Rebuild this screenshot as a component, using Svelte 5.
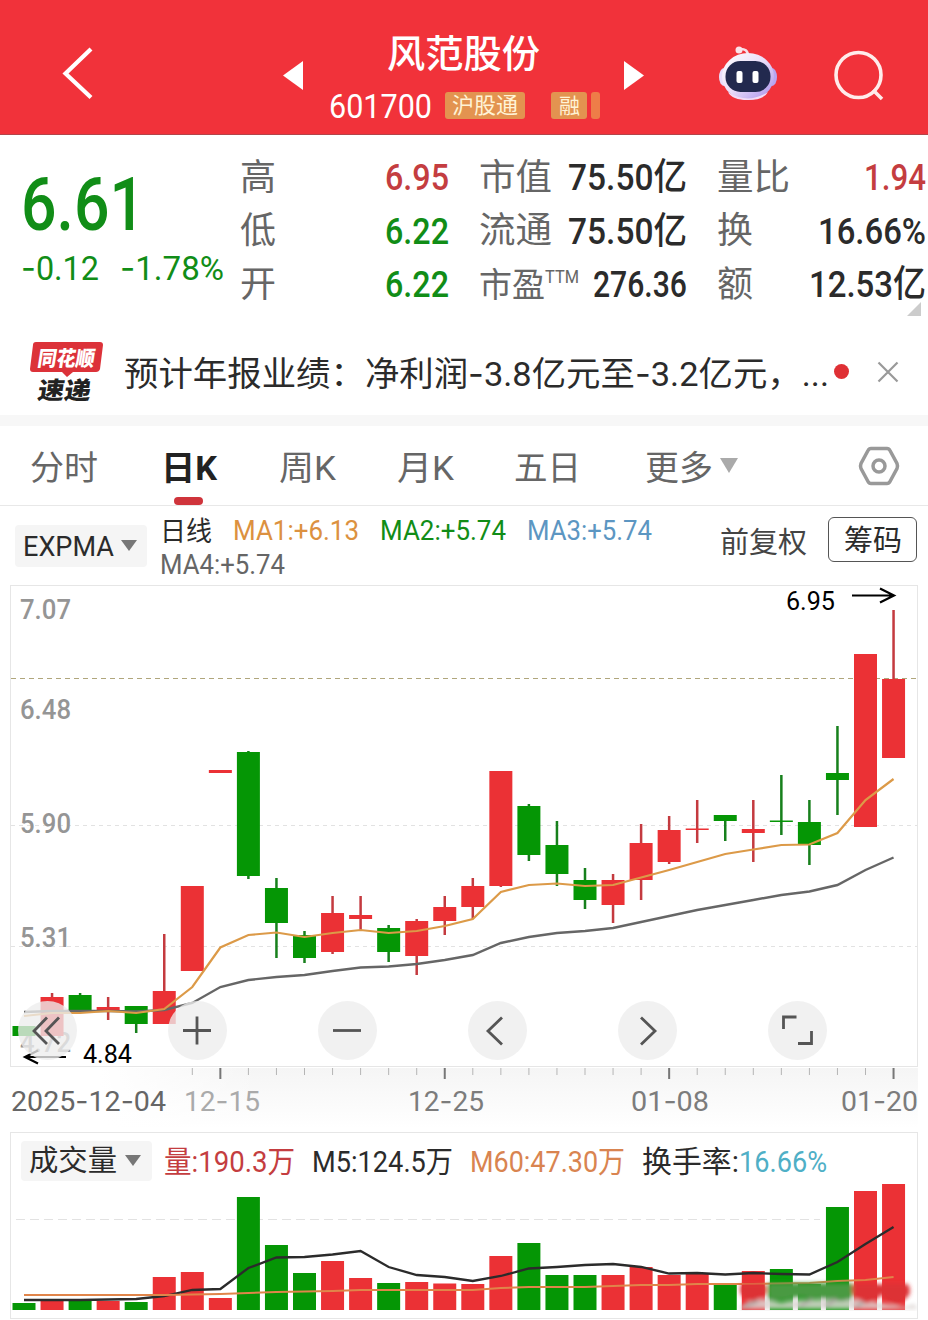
<script lang="ts">
  const RED = '#eb3135';
  const GREEN = '#059605';

  // [colour, high, bodyTop, bodyBottom, low, volumeTop]
  const candles: [string, number, number, number, number, number][] = [
    ['g', 1026, 1026, 1036, 1036, 1303],
    ['r', 993, 997, 1036, 1036, 1299],
    ['g', 993, 995, 1012, 1012, 1301],
    ['r', 997, 1007, 1012, 1020, 1301],
    ['g', 1006, 1006, 1024, 1033, 1302],
    ['r', 934, 991, 1024, 1024, 1277],
    ['r', 886, 886, 971, 971, 1272],
    ['r', 770, 770, 773, 773, 1298],
    ['g', 751, 752, 876, 879, 1197],
    ['g', 878, 888, 923, 958, 1245],
    ['g', 931, 935, 958, 963, 1273],
    ['r', 896, 913, 952, 954, 1261],
    ['r', 896, 915, 919, 930, 1278],
    ['g', 925, 928, 952, 962, 1283],
    ['r', 919, 921, 956, 975, 1282],
    ['r', 896, 907, 921, 935, 1283.5],
    ['r', 878, 886, 907, 919, 1284],
    ['r', 771, 771, 886, 887, 1256],
    ['g', 804, 806, 855, 861, 1243],
    ['g', 821, 845, 874, 886, 1275],
    ['g', 868, 880, 900, 909, 1275],
    ['r', 874, 880, 905, 923, 1275],
    ['r', 824, 843, 880, 900, 1267],
    ['r', 816, 830, 862, 864, 1275],
    ['r', 800, 828.5, 830, 843, 1273],
    ['g', 815, 815, 821, 841, 1284],
    ['r', 800, 829, 833, 862, 1271],
    ['g', 775, 820.5, 822, 835, 1269],
    ['g', 800, 822, 845, 865, 1284],
    ['g', 726, 773, 780, 815, 1207],
    ['r', 654, 654, 827, 827, 1191],
    ['r', 610, 679, 758, 758, 1184],
  ];

  const ma1 = [1016, 1013, 1013, 1011, 1013, 1009, 987, 947.5, 935, 932.5, 937, 933, 930, 933, 931, 926, 919, 892, 885, 883.5, 886, 885, 877.5, 870, 862, 854, 849.5, 845, 844.5, 833, 800, 779];
  const ma4 = [1012, 1011, 1011, 1011, 1011.5, 1010, 1003, 987, 980, 977, 975, 971, 967.5, 966.5, 964, 960, 955, 943, 937, 933, 931, 928, 922, 916, 910, 905, 900, 895, 891.5, 885, 870, 857.5];
  const m5 = [1300, 1300, 1300, 1299.5, 1299, 1296, 1290, 1289, 1268, 1257.5, 1257, 1254.5, 1251, 1267, 1275, 1277, 1281, 1276, 1268.5, 1267, 1265, 1264, 1267, 1273.5, 1273, 1274.5, 1273, 1274, 1274.5, 1262, 1244, 1227];
  const m60 = [1295, 1295, 1295, 1295, 1295, 1295, 1294.5, 1294, 1293, 1292, 1291.5, 1291, 1290, 1290, 1290, 1290, 1290, 1288, 1287, 1287, 1287, 1286, 1285, 1285, 1284, 1284, 1284, 1283.5, 1283, 1281, 1280, 1277];

  const cx = (i: number) => 24 + i * 28.05;
  const line = (ys: number[]) => ys.map((y, i) => `${cx(i)},${y}`).join(' ');
  const fill = (c: string) => (c === 'r' ? RED : GREEN);

  const axis = [
    ['7.07', 619],
    ['6.48', 719],
    ['5.90', 833],
    ['5.31', 947],
    ['4.72', 1052],
  ] as [string, number][];

  const dates = [
    ['2025-12-04', 11, 155, '#666'],
    ['12-15', 184, 76, '#aaa'],
    ['12-25', 408, 76, '#7c7c7c'],
    ['01-08', 631, 78, '#7c7c7c'],
    ['01-20', 841, 77, '#7c7c7c'],
  ] as [string, number, number, string][];

  const tabs = [
    ['分时', 68],
    ['日K', 56],
    ['周K', 57],
    ['月K', 57],
    ['五日', 67],
    ['更多', 68],
  ] as [string, number][];
  let active = $state('日K');

  // back, zoom in, zoom out, prev, next, fullscreen
  const controls = [
    'M29 16.500l-13 13.500 13 13M41 16.500l-13 13.500 13 13',
    'M15 29.5h28M29 15.5v28',
    'M15 29.5h28',
    'M34 16.500l-14 13.500 14 13.500',
    'M23 16.500l14 13.500-14 13.500',
    'M15.500 28v-12h13M43.500 30v12.500h-13.500',
  ];
</script>

{#snippet parts(text: string)}{#each text.split(/(-)/) as p}{#if p === '-'}<tspan class="dash">-</tspan>{:else}{p}{/if}{/each}{/snippet}

<!-- one line of text squeezed to an exact width -->
{#snippet fit(text: string, w: number, size: number, cls = '')}
  <svg class="fit {cls}" width={w} height={size}>
    <text x="0" y={size * 0.87} font-size={size} textLength={w} lengthAdjust="spacingAndGlyphs">{@render parts(text)}</text>
  </svg>
{/snippet}

<div class="app">
  <header>
    <svg class="back" width="32" height="54" viewBox="0 0 32 54"><path d="M29 3L3.500 27.500 29 51.500" fill="none" stroke="#fff" stroke-width="4.200" /></svg>
    <svg class="prev" width="20" height="30" viewBox="0 0 20 30"><path d="M20 0v29L0 14.500z" fill="#fff" /></svg>
    <div class="title">
      <div class="name">{@render fit('风范股份', 153, 38, 'mid')}</div>
      <div class="code">
        {@render fit('601700', 103, 33)}
        <span class="tag hgt">{@render fit('沪股通', 66, 22)}</span>
        <span class="tag rong">{@render fit('融', 21, 21)}</span>
        <span class="tag cut"></span>
      </div>
    </div>
    <svg class="next" width="20" height="30" viewBox="0 0 20 30"><path d="M0 0v29L20 14.500z" fill="#fff" /></svg>
    <svg class="robot" width="60" height="58" viewBox="0 0 60 58">
      <defs>
        <linearGradient id="shell" x1="0" y1="0" x2="1" y2="1">
          <stop offset="0" stop-color="#fff" /><stop offset=".5" stop-color="#e9dcf8" /><stop offset="1" stop-color="#a58bea" />
        </linearGradient>
      </defs>
      <path d="M21 4q9-1 9 7" fill="none" stroke="#f7dfe9" stroke-width="2.500" />
      <circle cx="21" cy="5" r="3.500" fill="#fbe3ea" />
      <ellipse cx="6" cy="32" rx="5" ry="9" fill="#e8dcfa" />
      <ellipse cx="54" cy="32" rx="5" ry="9" fill="#b8a5f2" />
      <ellipse cx="30" cy="31.500" rx="26" ry="23.500" fill="url(#shell)" />
      <path d="M10 47q20 13 40 0-4 8-20 8t-20-8z" fill="#f3dcf5" />
      <rect x="7.500" y="16" width="45" height="31" rx="15" fill="#22294e" />
      <rect x="18.500" y="26" width="6" height="12" rx="2" fill="#fff" />
      <rect x="34.500" y="26" width="6" height="12" rx="2" fill="#fff" />
    </svg>
    <svg class="search" width="52" height="52" viewBox="0 0 52 52"><circle cx="25.500" cy="25" r="22.500" /><path d="M40 40l9 9" /></svg>
  </header>

  <section class="quote">
    <div class="price">
      {@render fit('6.61', 124, 75, 'green mid')}
      <div class="chg">
        {@render fit('-0.12', 78, 34, 'green')}
        {@render fit('-1.78%', 104, 34, 'green')}
      </div>
    </div>
    <dl>
      <div>{@render fit('高', 36, 36, 'gray')}{@render fit('6.95', 64, 37, 'crimson mid')}</div>
      <div>{@render fit('低', 36, 36, 'gray')}{@render fit('6.22', 64, 37, 'green mid')}</div>
      <div>{@render fit('开', 36, 36, 'gray')}{@render fit('6.22', 64, 37, 'green mid')}</div>
    </dl>
    <dl>
      <div>{@render fit('市值', 73, 36, 'gray')}{@render fit('75.50亿', 119, 37, 'mid')}</div>
      <div>{@render fit('流通', 73, 36, 'gray')}{@render fit('75.50亿', 119, 37, 'mid')}</div>
      <div>
        <span class="pe">{@render fit('市盈', 66, 34, 'gray')}{@render fit('TTM', 34, 18, 'gray')}</span>
        {@render fit('276.36', 94, 37, 'mid')}
      </div>
    </dl>
    <dl>
      <div>{@render fit('量比', 73, 36, 'gray')}{@render fit('1.94', 62, 37, 'crimson mid')}</div>
      <div>{@render fit('换', 36, 36, 'gray')}{@render fit('16.66%', 108, 37, 'mid')}</div>
      <div>{@render fit('额', 36, 36, 'gray')}{@render fit('12.53亿', 117, 37, 'mid')}</div>
    </dl>
    <i class="corner"></i>
  </section>

  <section class="news">
    <svg width="76" height="64" viewBox="0 0 76 64">
      <path d="M7 2h64q3 0 3 3l-3 24q-1 3-4 3H44l-6 5-5-5H4q-3 0-3-3L4 5q0-3 3-3z" fill="#dc3239" />
      <g transform="skewX(-9)">
        <text x="12" y="26" font-size="21" font-weight="900" fill="#fff" textLength="57" lengthAdjust="spacingAndGlyphs">同花顺</text>
        <text x="17" y="59" font-size="24" font-weight="900" fill="#222" textLength="53" lengthAdjust="spacingAndGlyphs">速递</text>
      </g>
    </svg>
    {@render fit('预计年报业绩：净利润-3.8亿元至-3.2亿元，...', 705, 34, 'headline')}
    <i class="dot"></i>
    <svg class="close" width="22" height="22" viewBox="0 0 22 22"><path d="M1.500 1.500l19 19M20.500 1.500l-19 19" stroke="#999" stroke-width="2.200" /></svg>
  </section>

  <nav>
    {#each tabs as [t, w]}
      <button class="tab" class:on={t === active} onclick={() => (active = t)}>
        {@render fit(t, w, 34)}
        {#if t === '更多'}<i class="tri big"></i>{/if}
      </button>
    {/each}
    <svg class="gear" width="42" height="40" viewBox="0 0 42 40">
      <path d="M13 2.500h16q2 0 3 2l7 13q1 2.500 0 5l-7 13q-1 2-3 2H13q-2 0-3-2l-7-13q-1-2.500 0-5l7-13q1-2 3-2z" />
      <circle cx="21" cy="20" r="6" />
    </svg>
  </nav>

  <section class="indicators">
    <button class="pick">{@render fit('EXPMA', 91, 28)}<i class="tri"></i></button>
    <div class="mas">
      <div>
        {@render fit('日线', 52, 27)}
        {@render fit('MA1:+6.13', 126, 28, 'orange')}
        {@render fit('MA2:+5.74', 126, 28, 'green')}
        {@render fit('MA3:+5.74', 125, 28, 'blue')}
      </div>
      <div>{@render fit('MA4:+5.74', 125, 28, 'gray')}</div>
    </div>
    {@render fit('前复权', 87, 29, 'dark')}
    <button class="chips">{@render fit('筹码', 58, 29)}</button>
  </section>

  <section class="kline">
    <svg width="928" height="547" viewBox="0 585 928 547">
      <defs>
        <linearGradient id="strip" x1="0" y1="0" x2="0" y2="1"><stop offset="0" stop-color="#f5f5f5" /><stop offset="1" stop-color="#fff" /></linearGradient>
        <linearGradient id="fade" x1="0" y1="0" x2="1" y2="0"><stop offset="0" stop-color="#fff" /><stop offset="1" stop-color="#fff" stop-opacity="0" /></linearGradient>
      </defs>
      <rect x="100" y="1068" width="818" height="60" fill="url(#strip)" />
      <rect x="100" y="1068" width="160" height="60" fill="url(#fade)" />
      <rect x="10.500" y="585.500" width="907" height="481" fill="none" stroke="#e6e6e6" />
      <path d="M11 678.500H917" stroke="#b0a67c" stroke-dasharray="5 4" />
      <path d="M11 825.500H917M11 946.500H917" stroke="#e2e2e2" stroke-dasharray="4 4" />
      {#each axis as [t, y]}
        <text x="20" {y} font-size="28" fill="#959595" font-weight="500" textLength="51" lengthAdjust="spacingAndGlyphs">{t}</text>
      {/each}
      {#each candles as [c, high, top, bottom, low], i}
        <rect x={cx(i) - 1.25} y={high} width="2.5" height={low - high} fill={c === 'r' ? '#c43a3f' : '#17801c'} />
        <rect x={cx(i) - 11.5} y={top} width="23" height={bottom - top} fill={fill(c)} />
      {/each}
      <polyline points={line(ma4)} fill="none" stroke="#666" stroke-width="2.400" />
      <polyline points={line(ma1)} fill="none" stroke="#dc9a48" stroke-width="2.200" />
      <text x="786" y="610" font-size="26" fill="#000" textLength="49" lengthAdjust="spacingAndGlyphs">6.95</text>
      <path d="M852 595.500H893M880 588.500l14 7-14 7" fill="none" stroke="#000" stroke-width="2.200" />
      <text x="83" y="1063" font-size="25.500" fill="#000" textLength="49" lengthAdjust="spacingAndGlyphs">4.84</text>
      <path d="M66 1057H25M38 1050.500l-13 6.500 13 6.500" fill="none" stroke="#000" stroke-width="2.200" />
      {#each candles as _, i}
        {#if i >= 6}
          {@const major = i % 8 === 7}
          <rect x={cx(i) - (major ? 1 : 0.5)} y="1068" width={major ? 2 : 1} height={major ? 11 : 7} fill={major ? '#777' : '#b5b5b5'} />
        {/if}
      {/each}
      {#each dates as [t, x, w, color]}
        <text {x} y="1111" font-size="28.500" fill={color} textLength={w} lengthAdjust="spacingAndGlyphs">{@render parts(t)}</text>
      {/each}
    </svg>
    <div class="controls">
      {#each controls as d}
        <button><svg width="59" height="59" viewBox="0 0 59 59"><path {d} fill="none" stroke="#555" stroke-width="2.800" /></svg></button>
      {/each}
    </div>
  </section>

  <section class="volume">
    <div class="legend">
      <button class="pick vol">{@render fit('成交量', 88, 29)}<i class="tri"></i></button>
      {@render fit('量:190.3万', 131, 30, 'crimson')}
      {@render fit('M5:124.5万', 141, 30)}
      {@render fit('M60:47.30万', 155, 30, 'copper')}
      <span class="turn">{@render fit('换手率:', 97, 30)}{@render fit('16.66%', 88, 30, 'cyan')}</span>
    </div>
    <svg width="906" height="130" viewBox="11 1181 906 130">
      <defs>
        <filter id="soft" x="-20%" y="-40%" width="140%" height="180%"><feGaussianBlur stdDeviation="2" /></filter>
      </defs>
      <path d="M16 1219.500H820" stroke="#e2e2e2" stroke-dasharray="9 5" />
      {#each candles as [c, , , , , top], i}
        <rect x={cx(i) - 11.5} y={top} width="23" height={1310 - top} fill={fill(c)} />
      {/each}
      <polyline points={line(m5)} fill="none" stroke="#2b2b2b" stroke-width="2.300" />
      <polyline points={line(m60)} fill="none" stroke="#e0854a" stroke-width="2" />
      <g filter="url(#soft)">
        <path d="M739 1309q8-11 26-10l16 4 14-3 59-1 26 4 24 4 10-3 4 5z" fill="#dcd6d3" opacity=".85" />
        <path d="M768 1283h84v15q-10 6-20 1l-36-2q-14 6-28 2z" fill="#4a9a42" />
        <path d="M741 1284h24q4 9-3 13l-9 5-9-5q-6-4-3-13z" fill="#dd3035" />
        <path d="M853 1284h28q5 9-3 14l-11 6-11-6q-6-5-3-14z" fill="#dd3035" />
        <path d="M882 1284h26q5 10-3 15l-9 7-10-7q-7-6-4-15z" fill="#dd3035" />
        <path d="M744 1307l14-6M800 1306l12-7M826 1306l10-7M856 1307l8-5" stroke="#aaa29f" stroke-width="3" />
      </g>
    </svg>
  </section>
</div>

<style>
  :global(body) {
    background: #fff;
  }
  .app {
    width: 928px;
    height: 1320px;
    overflow: hidden;
    font-family: Roboto, 'Noto Sans CJK SC', sans-serif;
    color: #2b2b2b;
  }
  svg {
    display: block;
    flex: none;
  }
  .fit {
    overflow: visible;
    fill: currentColor;
  }
  .dash {
    font-family: Inter, sans-serif;
  }
  button {
    border: 0;
    padding: 0;
    background: none;
    color: inherit;
    font: inherit;
  }
  i {
    flex: none;
  }
  .mid { font-weight: 500; }
  .green { color: #118d17; }
  .crimson { color: #c43d40; }
  .gray { color: #666; }
  .dark { color: #444; margin-bottom: 6px; }
  .orange { color: #dc9140; }
  .blue { color: #5c96c2; }
  .copper { color: #d98450; }
  .cyan { color: #4fafc6; }

  header {
    display: flex;
    height: 134px;
    background: #f1323a;
    border-bottom: 1px solid #b34449;
    color: #fff;
  }
  .back { margin: 46px 0 0 62px; }
  .prev { margin: 61px 0 0 189px; }
  .title {
    width: 321px;
    padding-top: 34px;
    box-sizing: border-box;
  }
  .name {
    padding-left: 84px;
  }
  .code {
    display: flex;
    align-items: center;
    margin-top: 15px;
    padding-left: 26px;
    height: 36px;
  }
  .tag {
    display: flex;
    align-items: center;
    justify-content: center;
    height: 27px;
    border-radius: 3px;
    background: #e39350;
    color: #fff3d6;
    flex: none;
  }
  .hgt { width: 80px; margin-left: 13px; }
  .rong { width: 36px; margin-left: 26px; }
  .cut { width: 9px; margin-left: 4px; background: #ee7d48; }
  .next { margin: 61px 0 0 0; }
  .robot { margin: 45px 0 0 74px; }
  .search {
    margin: 50px 0 0 55px;
    fill: none;
    stroke: #ffeceb;
    stroke-width: 3.6;
  }

  .quote {
    position: relative;
    display: grid;
    grid-template-columns: 210px 209px 208px 209px;
    column-gap: 30px;
    height: 193px;
    padding-top: 15px;
    box-sizing: border-box;
  }
  .price {
    padding: 15px 0 0 21px;
  }
  .chg {
    display: flex;
    gap: 21px;
    margin-top: 10px;
  }
  dl { margin: 0; }
  dl > div {
    display: flex;
    align-items: center;
    justify-content: space-between;
    height: 53.5px;
  }
  .pe { display: flex; }
  .corner {
    position: absolute;
    right: 7px;
    bottom: 12px;
    border-left: 14px solid transparent;
    border-bottom: 14px solid #ccc;
  }

  .news {
    display: flex;
    align-items: center;
    height: 87px;
    padding-left: 29px;
    border-bottom: 11px solid #f7f7f7;
  }
  .news svg:first-child { margin-right: 19px; }
  .headline { margin-top: 3px; }
  .dot {
    width: 15px;
    height: 15px;
    margin-left: 5px;
    border-radius: 50%;
    background: #df3035;
  }
  .close { margin-left: 28px; }

  nav {
    display: grid;
    grid-template-columns: 131px 118px 118px 117px 131px 213px auto;
    align-items: center;
    height: 79px;
    padding-left: 30px;
    border-bottom: 1px solid #e8e8e8;
  }
  .tab {
    position: relative;
    display: flex;
    align-items: center;
    height: 79px;
    color: #666;
  }
  .tab .fit { margin-top: 3px; }
  .tab.on {
    color: #222;
    font-weight: 700;
  }
  .tab.on::after {
    content: '';
    position: absolute;
    left: 13px;
    bottom: 0;
    width: 29px;
    height: 8px;
    border-radius: 4px;
    background: #cf343b;
  }
  .tri {
    border: 8px solid transparent;
    border-top: 11px solid #777;
    border-bottom: 0;
  }
  .tri.big {
    margin-left: 7px;
    border-width: 15px 9px 0;
    border-top-color: #aaa;
  }
  .gear {
    fill: none;
    stroke: #999;
    stroke-width: 3.5;
  }

  .indicators {
    display: flex;
    align-items: center;
    height: 79px;
    padding-left: 15px;
  }
  .pick {
    display: flex;
    align-items: center;
    gap: 7px;
    width: 132px;
    height: 42px;
    padding-left: 8px;
    border-radius: 4px;
    background: #f5f5f5;
  }
  .mas { width: 560px; margin: 3px 0 0 13px; }
  .mas > div {
    display: flex;
    align-items: center;
    gap: 21px;
    height: 34px;
  }
  .chips {
    display: flex;
    align-items: center;
    justify-content: center;
    width: 89px;
    height: 45px;
    margin: 0 0 12px 21px;
    border: 1px solid #555;
    border-radius: 6px;
  }
  .chips .fit { margin-top: 2px; }

  .kline { position: relative; }
  .controls {
    position: absolute;
    left: 17.5px;
    top: 416px;
    display: flex;
    gap: 91.2px;
  }
  .controls button {
    width: 59px;
    height: 59px;
    border-radius: 50%;
    background: rgba(237, 237, 237, 0.78);
  }

  .volume {
    width: 906px;
    height: 185px;
    margin-left: 10px;
    border: 1px solid #e6e6e6;
  }
  .legend {
    display: flex;
    align-items: center;
    gap: 17px;
    height: 48px;
    padding: 7px 0 0 10px;
    box-sizing: border-box;
  }
  .pick.vol {
    width: 131px;
    height: 40px;
    margin: 0 -5px 0 0;
    gap: 8px;
  }
  .turn { display: flex; }
</style>
